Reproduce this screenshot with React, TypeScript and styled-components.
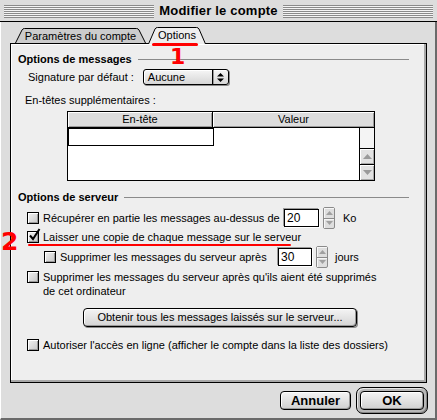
import styled, { createGlobalStyle } from "styled-components";

const GlobalStyle = createGlobalStyle`
  html, body {
    margin: 0;
    padding: 0;
    background: #dddddd;
  }
  body {
    font-family: "Liberation Sans", Arial, sans-serif;
    font-size: 11px;
    color: #000;
  }
`;

export default function App() {
  return (
    <>
      <GlobalStyle />
      <Window>
        <TitleBar>
          <Stripes />
          <Title>Modifier le compte</Title>
          <Stripes />
        </TitleBar>
        <Body>
          <TabRow>
            <Tab label="Paramètres du compte" width={131} />
            <Tab label="Options" width={58} active />
          </TabRow>
          <Panel>
            <SectionHeader>
              <span>Options de messages</span>
              <Rule />
            </SectionHeader>
            <SignatureRow>
              <span>Signature par défaut :</span>
              <Popup>
                <PopupText>Aucune</PopupText>
                <PopupArrows>
                  <svg width="7" height="9" viewBox="0 0 7 9">
                    <path d="M3.5 0 L7 3.5 L0 3.5 Z M0 5.5 L7 5.5 L3.5 9 Z" fill="#000" />
                  </svg>
                </PopupArrows>
              </Popup>
            </SignatureRow>
            <PlainLabel>En-têtes supplémentaires :</PlainLabel>
            <Table>
              <TableHead>
                <HeadCell $width={144}>En-tête</HeadCell>
                <HeadCell $divider>Valeur</HeadCell>
              </TableHead>
              <TableBody>
                <TableArea>
                  <EditCell />
                </TableArea>
                <ScrollBar>
                  <ScrollTrack />
                  <ScrollArrow>
                    <svg width="9" height="5" viewBox="0 0 9 5">
                      <path d="M4.5 0 L9 5 L0 5 Z" fill="#9a9a9a" />
                    </svg>
                  </ScrollArrow>
                  <ScrollArrow>
                    <svg width="9" height="5" viewBox="0 0 9 5">
                      <path d="M0 0 L9 0 L4.5 5 Z" fill="#9a9a9a" />
                    </svg>
                  </ScrollArrow>
                </ScrollBar>
              </TableBody>
            </Table>

            <SectionHeader $top={9}>
              <span>Options de serveur</span>
              <Rule />
            </SectionHeader>
            <CheckRow $top={3} $height={22}>
              <CheckBox />
              <RowLabel $width={237}>
                Récupérer en partie les messages au-dessus de
              </RowLabel>
              <NumberField $width={35}>20</NumberField>
              <Stepper />
              <Unit $gap={8}>Ko</Unit>
            </CheckRow>
            <CheckRow $height={16}>
              <CheckBox checked />
              <span>Laisser une copie de chaque message sur le serveur</span>
            </CheckRow>
            <CheckRow $top={1} $height={22} $indent={26}>
              <CheckBox />
              <RowLabel $width={214}>
                Supprimer les messages du serveur après
              </RowLabel>
              <NumberField $width={34}>30</NumberField>
              <Stepper />
              <Unit $gap={7}>jours</Unit>
            </CheckRow>
            <CheckRow $top={2} $height={28} $multiline>
              <CheckBox />
              <span>
                Supprimer les messages du serveur après qu'ils aient été
                supprimés
                <br />
                de cet ordinateur
              </span>
            </CheckRow>
            <WideButton>
              Obtenir tous les messages laissés sur le serveur...
            </WideButton>
            <CheckRow $top={11} $height={14}>
              <CheckBox />
              <span>
                Autoriser l'accès en ligne (afficher le compte dans la liste
                des dossiers)
              </span>
            </CheckRow>
          </Panel>
          <ButtonBar>
            <PushButton $width={71}>Annuler</PushButton>
            <DefaultRing>
              <PushButton $width={64}>OK</PushButton>
            </DefaultRing>
          </ButtonBar>
        </Body>

        <RedMark $x={152} $y={43} $w={46} $h={3} />
        <RedDigit $x={170} $y={46} $size={22}>
          1
        </RedDigit>
        <RedDigit $x={1} $y={229} $size={25}>
          2
        </RedDigit>
        <RedMark $x={28} $y={244} $w={263} $h={2} />
      </Window>
    </>
  );
}

function Tab({
  label,
  width,
  active,
}: {
  label: string;
  width: number;
  active?: boolean;
}) {
  const h = active ? 17 : 15;
  const s = 7;
  const d = `M0.5 ${h} L${s} 2 Q${s + 0.8} 0.5 ${s + 2.5} 0.5 L${
    width - s - 2.5
  } 0.5 Q${width - s - 0.8} 0.5 ${width - s} 2 L${width - 0.5} ${h}`;
  return (
    <TabShape $width={width} $height={h} $active={active}>
      <svg width={width} height={h}>
        <path
          d={d}
          fill={active ? "#eeeeee" : "#cccccc"}
          stroke="#000"
          strokeWidth="1"
        />
      </svg>
      <TabLabel>{label}</TabLabel>
    </TabShape>
  );
}

function CheckBox({ checked }: { checked?: boolean }) {
  return (
    <Box $checked={checked}>
      {checked && (
        <svg width="13" height="14" viewBox="0 0 13 14">
          <path
            d="M2 7.5 L5 11 L11.5 1"
            fill="none"
            stroke="#000"
            strokeWidth="2"
          />
        </svg>
      )}
    </Box>
  );
}

function Stepper() {
  return (
    <StepperBox>
      <StepperHalf>
        <svg width="7" height="4" viewBox="0 0 7 4">
          <path d="M3.5 0 L7 4 L0 4 Z" fill="#a0a0a0" />
        </svg>
      </StepperHalf>
      <StepperHalf $bottom>
        <svg width="7" height="4" viewBox="0 0 7 4">
          <path d="M0 0 L7 0 L3.5 4 Z" fill="#a0a0a0" />
        </svg>
      </StepperHalf>
    </StepperBox>
  );
}

const Window = styled.div`
  position: relative;
  width: 437px;
  height: 420px;
  overflow: hidden;
  background: #dddddd;
`;

const TitleBar = styled.div`
  display: flex;
  align-items: center;
  height: 21px;
  padding: 0 4px;
  border-bottom: 1px solid #000;
  background: #dddddd;
`;

const Stripes = styled.div`
  flex: 1;
  height: 13px;
  margin-top: 1px;
  background: repeating-linear-gradient(
    to bottom,
    #8a8a8a 0 1px,
    #f4f4f4 1px 2px
  );
`;

const Title = styled.div`
  padding: 0 5px;
  font-size: 13px;
  font-weight: bold;
  letter-spacing: 0.2px;
  line-height: 21px;
`;

const Body = styled.div`
  height: 398px;
  box-sizing: border-box;
  padding: 5px 0 0 9px;
  border-left: 1px solid #ffffff;
  border-right: 2px solid #6a6a6a;
  border-bottom: 2px solid #6a6a6a;
`;

const TabRow = styled.div`
  position: relative;
  z-index: 1;
  display: flex;
  align-items: flex-end;
  height: 17px;
  margin: 0 0 -1px 5px;
`;

const TabShape = styled.div<{
  $width: number;
  $height: number;
  $active?: boolean;
}>`
  position: relative;
  width: ${(p) => p.$width}px;
  height: ${(p) => p.$height}px;
  margin-right: 2px;
  margin-bottom: ${(p) => (p.$active ? 0 : 1)}px;
  display: flex;
  justify-content: center;
  align-items: ${(p) => (p.$active ? "flex-start" : "center")};
  svg {
    position: absolute;
    left: 0;
    top: 0;
  }
`;

const TabLabel = styled.span`
  position: relative;
  line-height: 15px;
  padding-top: 1px;
`;

const Panel = styled.div`
  width: 417px;
  height: 340px;
  box-sizing: border-box;
  padding: 8px 17px 0 7px;
  background: #eeeeee;
  border: 1px solid #000;
  box-shadow: inset -2px -2px 0 #a8a8a8, inset 1px 1px 0 #ffffff;
  display: flex;
  flex-direction: column;
  align-items: flex-start;
`;

const SectionHeader = styled.div<{ $top?: number }>`
  display: flex;
  align-items: center;
  align-self: stretch;
  height: 14px;
  margin-top: ${(p) => p.$top ?? 0}px;
  font-weight: bold;
  line-height: 14px;
`;

const Rule = styled.div`
  flex: 1;
  height: 1px;
  margin-left: 6px;
  background: #8a8a8a;
`;

const SignatureRow = styled.div`
  display: flex;
  align-items: center;
  gap: 9px;
  height: 16px;
  margin-top: 3px;
  padding-left: 10px;
`;

const Popup = styled.div`
  display: flex;
  width: 86px;
  height: 16px;
  box-sizing: border-box;
  border: 1px solid #000;
  border-radius: 3px;
  background: linear-gradient(#f6f6f6, #d6d6d6);
  box-shadow: 1px 1px 0 #8a8a8a, inset 1px 1px 0 #ffffff;
`;

const PopupText = styled.span`
  flex: 1;
  padding-left: 4px;
  line-height: 14px;
`;

const PopupArrows = styled.span`
  width: 15px;
  display: flex;
  align-items: center;
  justify-content: center;
  border-left: 1px solid #000;
  box-shadow: inset 1px 0 0 #9a9a9a;
`;

const PlainLabel = styled.div`
  height: 14px;
  line-height: 14px;
  margin-top: 8px;
  padding-left: 7px;
`;

const Table = styled.div`
  width: 308px;
  height: 70px;
  box-sizing: border-box;
  margin: 4px 0 0 49px;
  border: 1px solid #000;
  display: flex;
  flex-direction: column;
`;

const TableHead = styled.div`
  display: flex;
  height: 16px;
  box-sizing: border-box;
  border-bottom: 1px solid #000;
`;

const HeadCell = styled.div<{ $width?: number; $divider?: boolean }>`
  ${(p) => (p.$width ? `width: ${p.$width}px;` : "flex: 1;")}
  background: #dddddd;
  text-align: center;
  line-height: 15px;
  ${(p) => (p.$divider ? "border-left: 1px solid #000;" : "")}
  box-shadow: inset 1px 1px 0 #ffffff, inset -1px -1px 0 #9a9a9a;
`;

const TableBody = styled.div`
  flex: 1;
  display: flex;
  background: #ffffff;
`;

const TableArea = styled.div`
  flex: 1;
`;

const EditCell = styled.div`
  width: 146px;
  height: 18px;
  box-sizing: border-box;
  border: 1px solid #000;
  background: #ffffff;
`;

const ScrollBar = styled.div`
  width: 15px;
  box-sizing: border-box;
  border-left: 1px solid #000;
  display: flex;
  flex-direction: column;
`;

const ScrollTrack = styled.div`
  flex: 1;
  background: #f4f4f4;
`;

const ScrollArrow = styled.div`
  height: 15px;
  border-top: 1px solid #000;
  background: #e2e2e2;
  box-shadow: inset 1px 1px 0 #ffffff, inset -1px -1px 0 #a8a8a8;
  display: flex;
  align-items: center;
  justify-content: center;
`;

const CheckRow = styled.div<{
  $top?: number;
  $height: number;
  $indent?: number;
  $multiline?: boolean;
}>`
  display: flex;
  align-items: ${(p) => (p.$multiline ? "flex-start" : "center")};
  gap: 4px;
  height: ${(p) => p.$height}px;
  margin-top: ${(p) => p.$top ?? 0}px;
  padding-left: ${(p) => p.$indent ?? 9}px;
  line-height: 14px;
  white-space: nowrap;
  & > span:first-child {
    margin-top: ${(p) => (p.$multiline ? 1 : 0)}px;
  }
`;

const Box = styled.span<{ $checked?: boolean }>`
  position: relative;
  flex: none;
  width: 12px;
  height: 12px;
  box-sizing: border-box;
  border: 1px solid #000;
  background: linear-gradient(135deg, #f2f2f2, #c6c6c6);
  box-shadow: inset 1px 1px 0 #ffffff, inset -1px -1px 0 #999999;
  svg {
    position: absolute;
    left: 0;
    top: -4px;
  }
`;

const RowLabel = styled.span<{ $width: number }>`
  width: ${(p) => p.$width}px;
`;

const NumberField = styled.div<{ $width: number }>`
  width: ${(p) => p.$width}px;
  height: 18px;
  box-sizing: border-box;
  padding-left: 2px;
  border: 1px solid #000;
  background: #ffffff;
  box-shadow: -1px -1px 0 #9a9a9a, 1px 1px 0 #ffffff;
  font-size: 12px;
  line-height: 16px;
`;

const StepperBox = styled.div`
  width: 12px;
  height: 22px;
  box-sizing: border-box;
  border: 1px solid #8a8a8a;
  border-radius: 2px;
  display: flex;
  flex-direction: column;
  background: #dedede;
`;

const StepperHalf = styled.div<{ $bottom?: boolean }>`
  flex: 1;
  display: flex;
  align-items: center;
  justify-content: center;
  ${(p) => (p.$bottom ? "border-top: 1px solid #8a8a8a;" : "")}
  box-shadow: inset 1px 1px 0 #f6f6f6;
`;

const Unit = styled.span<{ $gap: number }>`
  margin-left: ${(p) => p.$gap - 4}px;
`;

const WideButton = styled.div`
  width: 274px;
  height: 19px;
  box-sizing: border-box;
  margin: 10px 0 0 65px;
  border: 1px solid #000;
  border-radius: 4px;
  background: linear-gradient(#f4f4f4, #d4d4d4);
  box-shadow: inset 1px 1px 0 #ffffff, inset -1px -1px 0 #9a9a9a,
    1px 1px 0 #8a8a8a;
  text-align: center;
  line-height: 17px;
`;

const ButtonBar = styled.div`
  height: 35px;
  display: flex;
  align-items: center;
  justify-content: flex-end;
  gap: 5px;
  padding-right: 7px;
`;

const PushButton = styled.div<{ $width: number }>`
  width: ${(p) => p.$width}px;
  height: 19px;
  box-sizing: border-box;
  border: 1px solid #000;
  border-radius: 4px;
  background: linear-gradient(#f4f4f4, #d0d0d0);
  box-shadow: inset 1px 1px 0 #ffffff, inset -1px -1px 0 #9a9a9a;
  font-size: 13px;
  font-weight: bold;
  text-align: center;
  line-height: 17px;
`;

const DefaultRing = styled.div`
  padding: 3px;
  border: 1px solid #000;
  border-radius: 7px;
  background: #b8b8b8;
  box-shadow: inset 1px 1px 0 #e8e8e8, inset -1px -1px 0 #888888;
`;

const RedMark = styled.div<{ $x: number; $y: number; $w: number; $h: number }>`
  position: absolute;
  left: ${(p) => p.$x}px;
  top: ${(p) => p.$y}px;
  width: ${(p) => p.$w}px;
  height: ${(p) => p.$h}px;
  border-radius: 2px;
  background: #ff0000;
  z-index: 2;
`;

const RedDigit = styled.div<{ $x: number; $y: number; $size: number }>`
  position: absolute;
  left: ${(p) => p.$x}px;
  top: ${(p) => p.$y}px;
  font-family: "DejaVu Sans", sans-serif;
  font-weight: bold;
  font-size: ${(p) => p.$size}px;
  line-height: 1;
  color: #ff0000;
  z-index: 2;
`;
